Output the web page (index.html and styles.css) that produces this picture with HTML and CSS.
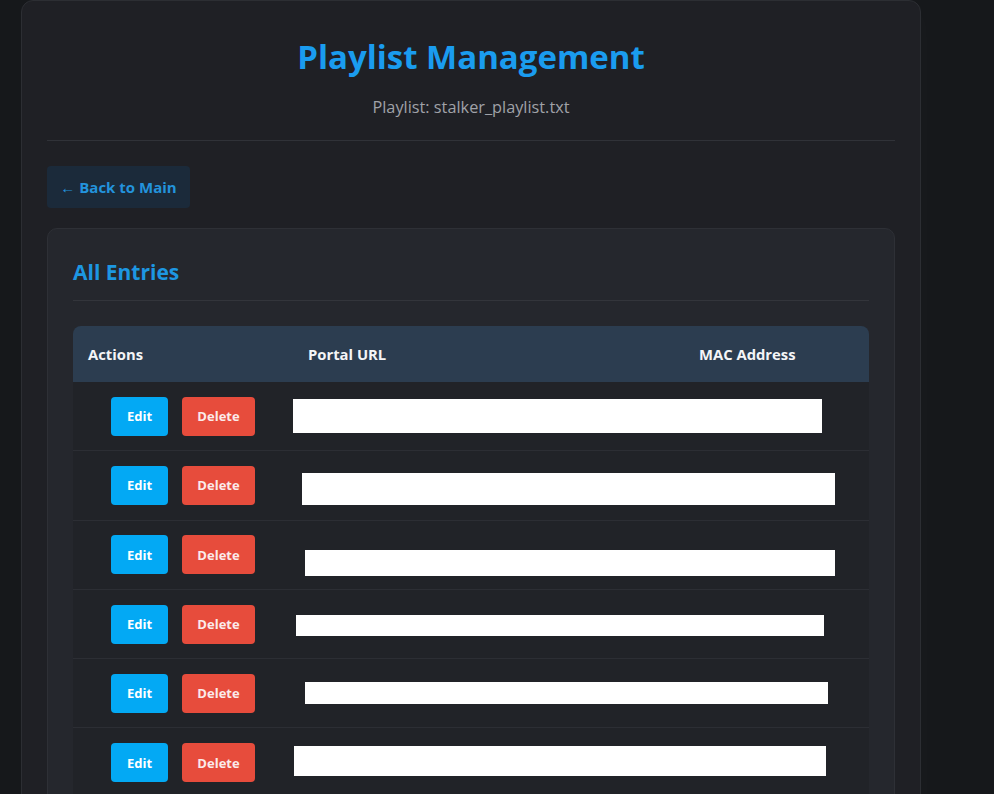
FILE: index.html
```html
<!DOCTYPE html>
<html lang="en">
<head>
<meta charset="utf-8">
<title>Playlist Management</title>
<link rel="stylesheet" href="styles.css">
</head>
<body>
<div class="page">
  <main class="container">
    <header class="page-header">
      <h1 class="title">Playlist Management</h1>
      <p class="subtitle">Playlist: stalker_playlist.txt</p>
    </header>
    <a class="back-btn" href="#">← Back to Main</a>
    <section class="card">
      <h2 class="card-title">All Entries</h2>
      <table class="entries">
        <colgroup>
          <col class="col-actions">
          <col class="col-url">
          <col class="col-mac">
        </colgroup>
        <thead>
          <tr><th>Actions</th><th>Portal URL</th><th>MAC Address</th></tr>
        </thead>
        <tbody>
          <tr>
            <td class="actions"><div class="btns"><button class="btn edit">Edit</button><button class="btn delete">Delete</button></div></td>
            <td class="redacted" colspan="2"><div class="mask" style="margin-left:0px;margin-top:17px;width:529px;height:34px"></div></td>
          </tr>
          <tr>
            <td class="actions"><div class="btns"><button class="btn edit">Edit</button><button class="btn delete">Delete</button></div></td>
            <td class="redacted" colspan="2"><div class="mask" style="margin-left:9px;margin-top:22px;width:533px;height:32px"></div></td>
          </tr>
          <tr>
            <td class="actions"><div class="btns"><button class="btn edit">Edit</button><button class="btn delete">Delete</button></div></td>
            <td class="redacted" colspan="2"><div class="mask" style="margin-left:12px;margin-top:29px;width:530px;height:26px"></div></td>
          </tr>
          <tr>
            <td class="actions"><div class="btns"><button class="btn edit">Edit</button><button class="btn delete">Delete</button></div></td>
            <td class="redacted" colspan="2"><div class="mask" style="margin-left:3px;margin-top:25px;width:528px;height:21px"></div></td>
          </tr>
          <tr>
            <td class="actions"><div class="btns"><button class="btn edit">Edit</button><button class="btn delete">Delete</button></div></td>
            <td class="redacted" colspan="2"><div class="mask" style="margin-left:12px;margin-top:23px;width:523px;height:22px"></div></td>
          </tr>
          <tr>
            <td class="actions"><div class="btns"><button class="btn edit">Edit</button><button class="btn delete">Delete</button></div></td>
            <td class="redacted" colspan="2"><div class="mask" style="margin-left:1px;margin-top:18px;width:532px;height:30px"></div></td>
          </tr>
        </tbody>
      </table>
    </section>
  </main>
</div>
</body>
</html>
```
FILE: styles.css
```css
* { box-sizing: border-box; }
html, body { margin: 0; padding: 0; }
body {
  background: #16181b;
  font-family: "Open Sans", "Noto Sans", sans-serif;
  color: #e6e6e6;
  height: 794px;
  overflow: hidden;
}
.page {
  padding-left: 21px;
}
.container {
  width: 900px;
  background: #1f2025;
  border: 1px solid #2c2e33;
  border-radius: 12px;
  padding: 36px 25px 40px;
  box-shadow: 12px 0 30px rgba(255, 255, 255, 0.012);
}
.page-header {
  text-align: center;
  border-bottom: 1px solid #303238;
  padding-bottom: 22px;
  margin-bottom: 25px;
}
.title {
  margin: 0;
  font-size: 33px;
  line-height: 40px;
  font-weight: 700;
  color: #1a9cef;
}
.subtitle {
  margin: 19px 0 0;
  font-size: 16.3px;
  line-height: 22px;
  color: #a0a2a8;
}
.back-btn {
  display: inline-block;
  height: 42px;
  width: 143px;
  line-height: 42px;
  text-align: center;
  background: #1b2a3a;
  color: #2393dc;
  font-weight: 700;
  font-size: 15px;
  text-decoration: none;
  border-radius: 4px;
  margin-bottom: 20px;
}
.card {
  background: #25272d;
  border: 1px solid #2e3036;
  border-radius: 10px;
  padding: 29px 25px 30px;
}
.card-title {
  margin: 0 0 25px;
  padding-bottom: 14px;
  border-bottom: 1px solid #33353b;
  font-size: 21px;
  line-height: 28px;
  font-weight: 700;
  color: #1d97e2;
}
.entries {
  width: 796px;
  border-collapse: separate;
  border-spacing: 0;
  table-layout: fixed;
}
.col-actions { width: 220px; }
.col-url { width: 391px; }
.col-mac { width: 185px; }
.entries thead th {
  background: #2c3d50;
  color: #f4f5f7;
  font-size: 14.8px;
  font-weight: 700;
  text-align: left;
  height: 56px;
  padding: 0 15px;
}
.entries thead th:first-child { border-top-left-radius: 8px; }
.entries thead th:last-child { border-top-right-radius: 8px; }
.entries tbody td {
  background: #212328;
  border-bottom: 1px solid #2c2e34;
  height: 69.3px;
  padding: 0;
  vertical-align: top;
}
.entries td.actions {
  vertical-align: middle;
}
.btns {
  display: flex;
  justify-content: center;
  gap: 14px;
}
.btn {
  height: 39px;
  border: none;
  border-radius: 4px;
  font-family: inherit;
  font-size: 13px;
  font-weight: 700;
  color: #ffffff;
  padding: 0;
  cursor: pointer;
}
.btn.edit { width: 57px; background: #03a9f4; }
.btn.delete { width: 73px; background: #e74c3c; color: #fbeaea; }
.mask {
  background: #ffffff;
}
```
